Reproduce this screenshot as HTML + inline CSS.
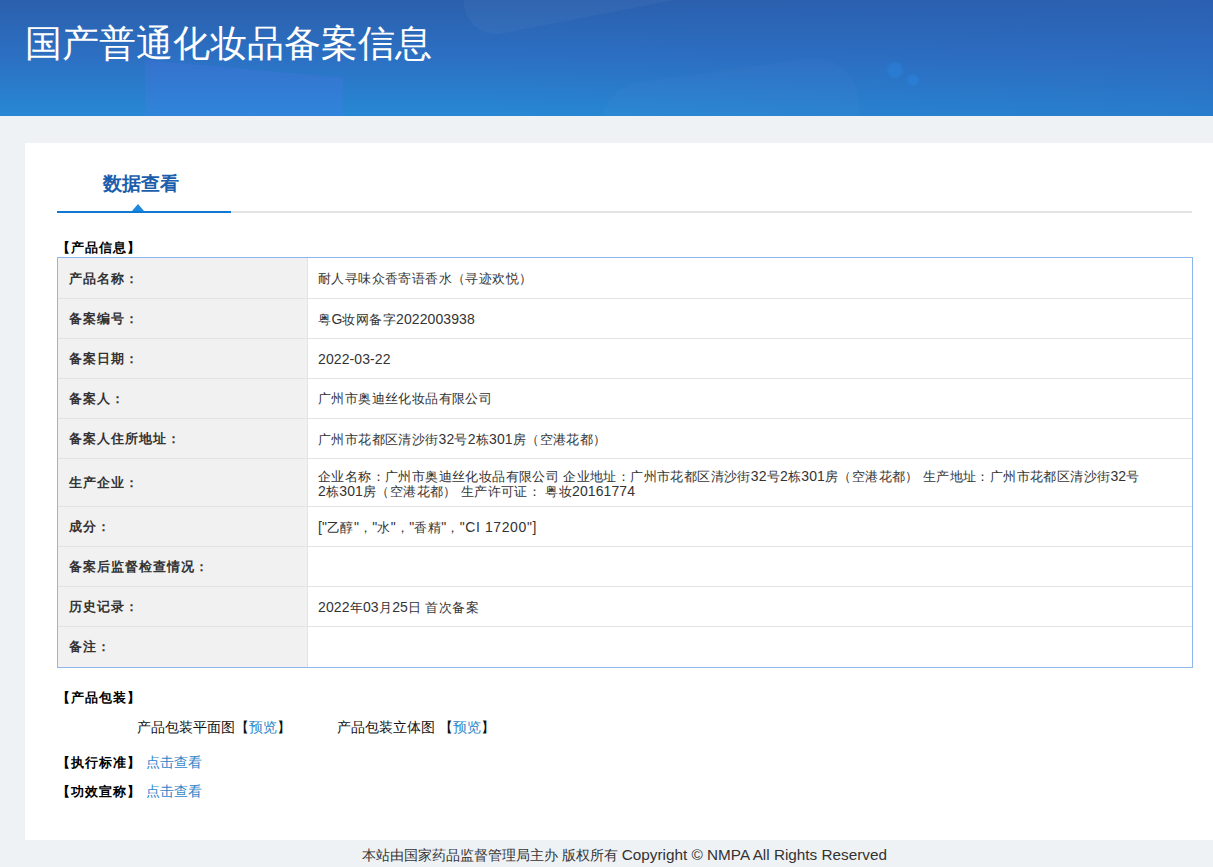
<!DOCTYPE html>
<html><head><meta charset="utf-8">
<style>
*{margin:0;padding:0;box-sizing:border-box}
html,body{width:1213px;height:867px;overflow:hidden;background:#eff2f5;font-family:"Liberation Sans",sans-serif;color:#333}
#hd{position:absolute;left:0;top:0;width:1213px;height:116px;background:linear-gradient(90deg,rgba(45,95,185,0) 0%,rgba(45,95,185,0) 40%,rgba(45,95,185,0.28) 100%),linear-gradient(180deg,#2b60ad 0%,#2c70c3 50%,#2788d4 100%);overflow:hidden}
#hd .t{position:absolute;left:25px;top:22px;font-size:37px;line-height:44px;color:#fff;white-space:nowrap;font-weight:500}
#panel{position:absolute;left:25px;top:143px;width:1188px;height:697px;background:#fff}
#tab{position:absolute;left:103px;top:172px;font-size:19px;line-height:24px;font-weight:bold;color:#1c5eab;white-space:nowrap}
#gline{position:absolute;left:57px;top:211px;width:1135px;height:2px;background:#e3e3e3}
#bline{position:absolute;left:57px;top:211px;width:174px;height:2px;background:#0e78d2}
#tri{position:absolute;left:132px;top:204px;width:0;height:0;border-left:6.5px solid transparent;border-right:6.5px solid transparent;border-bottom:7px solid #1c88de}
.h{position:absolute;font-size:13px;line-height:16px;font-weight:bold;color:#000;white-space:nowrap;letter-spacing:1px}
.p{position:absolute;font-size:14px;line-height:16px;color:#111;white-space:nowrap}
#tbl{position:absolute;left:57px;top:257px;width:1136px;height:411px;border:1px solid #8db6ec;background:#fff}
.r{position:absolute;left:0;width:1134px;border-bottom:1px solid #e3e3e3}
.r .l{position:absolute;left:0;top:0;width:250px;height:100%;background:#f1f1f1;border-right:1px solid #e3e3e3}
.r .lt{position:absolute;left:11px;font-size:13px;font-weight:bold;color:#333;white-space:nowrap;line-height:16px;letter-spacing:1px}
.r .v{position:absolute;left:260px;font-size:13px;color:#333;white-space:nowrap;line-height:14px;letter-spacing:0.4px}
.lk{color:#2f86c9}
.n{font-size:14px;letter-spacing:0.1px}
#ft{position:absolute;left:362px;top:841px;font-size:14px;line-height:27px;color:#333;white-space:nowrap}
#ft .en{font-size:15.3px}
</style></head><body>
<div id="hd">
 <div style="position:absolute;left:464px;top:-30px;width:420px;height:64px;border-radius:32px;background:rgba(255,255,255,0.035);transform:rotate(-11deg);transform-origin:32px 32px"></div>
 <div style="position:absolute;left:145px;top:60px;width:198px;height:80px;background:rgba(100,120,255,0.16);clip-path:polygon(0 0,100% 22%,100% 100%,0 100%)"></div>
 <div style="position:absolute;left:600px;top:70px;width:260px;height:90px;border-radius:45px;background:rgba(255,255,255,0.02);transform:rotate(-8deg)"></div>
 <div style="position:absolute;left:887px;top:62px;width:16px;height:16px;border-radius:50%;background:rgba(40,140,235,0.35);filter:blur(1px)"></div>
 <div style="position:absolute;left:907px;top:74px;width:12px;height:12px;border-radius:50%;background:rgba(40,140,235,0.35);filter:blur(1px)"></div>
 <div class="t">国产普通化妆品备案信息</div></div>
<div id="panel"></div>
<div id="tab">数据查看</div>
<div id="gline"></div><div id="bline"></div><div id="tri"></div>
<div class="h" style="left:57px;top:240px">【产品信息】</div>
<div id="tbl">
 <div class="r" style="top:0;height:41px"><div class="l"></div><div class="lt" style="top:13px">产品名称：</div><div class="v" style="top:14px">耐人寻味众香寄语香水（寻迹欢悦）</div></div>
 <div class="r" style="top:41px;height:40px"><div class="l"></div><div class="lt" style="top:12px">备案编号：</div><div class="v" style="top:13px">粤<span class="n">G</span>妆网备字<span class="n">2022003938</span></div></div>
 <div class="r" style="top:81px;height:40px"><div class="l"></div><div class="lt" style="top:12px">备案日期：</div><div class="v" style="top:13px"><span class="n">2022-03-22</span></div></div>
 <div class="r" style="top:121px;height:40px"><div class="l"></div><div class="lt" style="top:12px">备案人：</div><div class="v" style="top:13px">广州市奥迪丝化妆品有限公司</div></div>
 <div class="r" style="top:161px;height:40px"><div class="l"></div><div class="lt" style="top:12px">备案人住所地址：</div><div class="v" style="top:13px">广州市花都区清沙街<span class="n">32</span>号<span class="n">2</span>栋<span class="n">301</span>房（空港花都）</div></div>
 <div class="r" style="top:201px;height:48px"><div class="l"></div><div class="lt" style="top:16px">生产企业：</div><div class="v" style="top:10px;line-height:14px">企业名称：广州市奥迪丝化妆品有限公司 企业地址：广州市花都区清沙街<span class="n">32</span>号<span class="n">2</span>栋<span class="n">301</span>房（空港花都） 生产地址：广州市花都区清沙街<span class="n">32</span>号<br><span class="n">2</span>栋<span class="n">301</span>房（空港花都） 生产许可证： 粤妆<span class="n">20161774</span></div></div>
 <div class="r" style="top:249px;height:40px"><div class="l"></div><div class="lt" style="top:12px">成分：</div><div class="v" style="top:13px"><span class="n">["</span>乙醇<span class="n">"</span>，<span class="n">"</span>水<span class="n">"</span>，<span class="n">"</span>香精<span class="n">"</span>，<span class="n" style="letter-spacing:0.6px">"CI 17200"]</span></div></div>
 <div class="r" style="top:289px;height:40px"><div class="l"></div><div class="lt" style="top:12px">备案后监督检查情况：</div></div>
 <div class="r" style="top:329px;height:40px"><div class="l"></div><div class="lt" style="top:12px">历史记录：</div><div class="v" style="top:13px"><span class="n">2022</span>年<span class="n">03</span>月<span class="n">25</span>日 首次备案</div></div>
 <div class="r" style="top:369px;height:40px;border-bottom:0"><div class="l"></div><div class="lt" style="top:12px">备注：</div></div>
</div>
<div class="h" style="left:57px;top:690px">【产品包装】</div>
<div class="p" style="left:137px;top:719px">产品包装平面图【<span class="lk">预览</span>】</div>
<div class="p" style="left:337px;top:719px">产品包装立体图 【<span class="lk">预览</span>】</div>
<div class="h" style="left:57px;top:754px">【执行标准】 <span class="lk" style="font-weight:normal;font-size:14px;letter-spacing:0">点击查看</span></div>
<div class="h" style="left:57px;top:783px">【功效宣称】 <span class="lk" style="font-weight:normal;font-size:14px;letter-spacing:0">点击查看</span></div>
<div id="ft">本站由国家药品监督管理局主办 版权所有 <span class="en">Copyright © NMPA All Rights Reserved</span></div>
</body></html>
